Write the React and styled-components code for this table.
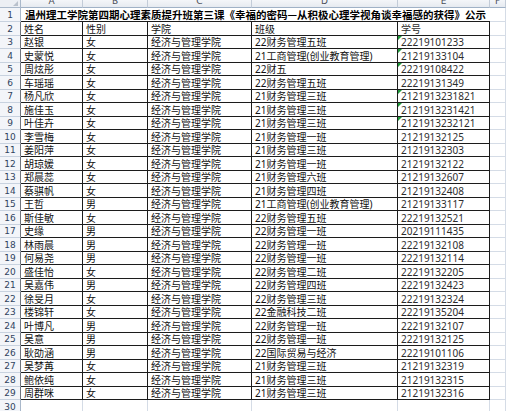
import styled, { createGlobalStyle } from "styled-components";

const GlobalStyle = createGlobalStyle`
    html, body {
        margin: 0;
        padding: 0;
        background: #ffffff;
    }
`;

const columns = ["A", "B", "C", "D", "E", "F"];

const students = [
    ["赵银", "女", "22财务管理五班", "22219101233", true],
    ["史蒙悦", "女", "21工商管理(创业教育管理)", "21219133104", true],
    ["周炫彤", "女", "22财五", "22219108422", true],
    ["车瑶瑶", "女", "22财务管理五班", "22219131349", false],
    ["杨凡欣", "女", "21财务管理三班", "2121913231821", true],
    ["施佳玉", "女", "21财务管理三班", "2121913231421", true],
    ["叶佳卉", "女", "21财务管理三班", "2121913232121", true],
    ["李雪梅", "女", "21财务管理一班", "21219132125", false],
    ["姜阳萍", "女", "21财务管理三班", "21219132303", false],
    ["胡琼媛", "女", "21财务管理一班", "21219132122", false],
    ["郑晨蕊", "女", "21财务管理六班", "21219132607", false],
    ["蔡骐帆", "女", "21财务管理四班", "21219132408", false],
    ["王哲", "男", "21工商管理(创业教育管理)", "21219133117", false],
    ["斯佳敏", "女", "22财务管理五班", "22219132521", false],
    ["史缘", "男", "22财务管理一班", "20219111435", false],
    ["林雨晨", "男", "22财务管理一班", "22219132108", false],
    ["何易尧", "男", "22财务管理一班", "22219132114", false],
    ["盛佳怡", "女", "22财务管理二班", "22219132205", false],
    ["吴嘉伟", "男", "22财务管理四班", "22219132423", false],
    ["徐旻月", "女", "22财务管理三班", "22219132324", false],
    ["楼锦轩", "女", "22金融科技二班", "22219135204", false],
    ["叶博凡", "男", "22财务管理一班", "22219132107", false],
    ["吴意", "男", "22财务管理一班", "22219132125", false],
    ["耿劭涵", "男", "22国际贸易与经济", "22219101106", false],
    ["吴梦苒", "女", "21财务管理三班", "21219132319", false],
    ["鲍依纯", "女", "21财务管理三班", "21219132315", false],
    ["周群咪", "女", "21财务管理三班", "21219132316", false],
];

const Sheet = styled.div`
    width: 506px;
    height: 411px;
    overflow: hidden;
    display: grid;
    grid-template-columns: 21px 62px 65px 104px 146px 92px 16px;
    grid-template-rows: 8px 14px repeat(14, 14px 13px) 14px;
    font-family: "Noto Sans", "Noto Sans CJK SC", sans-serif;
    font-size: 10px;
    color: #111111;
    background: #ffffff;
`;

const Corner = styled.div`
    position: relative;
    background: #eceff4;
    border-right: 1px solid #a9b8ca;
    border-bottom: 1px solid #a9b8ca;
    box-sizing: border-box;

    &::after {
        content: "";
        position: absolute;
        right: 2px;
        bottom: 1px;
        border-left: 5px solid transparent;
        border-bottom: 5px solid #b9c1cc;
    }
`;

const ColHeader = styled.div`
    box-sizing: border-box;
    display: flex;
    align-items: flex-end;
    justify-content: center;
    overflow: hidden;
    background: linear-gradient(#f4f6f9, #e6eaf0);
    border-right: 1px solid #c3ccd8;
    border-bottom: 1px solid #9fb1c6;
    font-family: "DejaVu Sans", sans-serif;
    font-size: 9px;
    line-height: 11px;
    color: #4a4f58;
`;

const RowHeader = styled.div`
    box-sizing: border-box;
    display: flex;
    align-items: center;
    justify-content: center;
    overflow: hidden;
    background: #f3f5f9;
    border-right: 1px solid ${({ $boxed }) => ($boxed ? "#6f747c" : "#a9b8ca")};
    border-bottom: 1px solid #c8d2df;
    font-family: "DejaVu Sans", sans-serif;
    font-size: 9px;
    color: #30445e;
`;

const Cell = styled.div`
    box-sizing: border-box;
    position: relative;
    display: flex;
    align-items: flex-end;
    padding: 0 3px 0 3px;
    overflow: hidden;
    white-space: nowrap;
    line-height: 12px;
    border-right: 1px solid ${({ $boxed }) => ($boxed ? "#1c1c1c" : "#d5dce6")};
    border-bottom: 1px solid ${({ $boxed }) => ($boxed ? "#1c1c1c" : "#d5dce6")};
    color: ${({ $num }) => ($num ? "#2d2d2d" : "#111111")};

    &::before {
        content: "";
        display: ${({ $flag }) => ($flag ? "block" : "none")};
        position: absolute;
        left: 0;
        top: 0;
        border-top: 4px solid #1f9a3a;
        border-right: 4px solid transparent;
    }
`;

const TitleCell = styled.div`
    grid-column: 2 / 7;
    box-sizing: border-box;
    display: flex;
    align-items: flex-end;
    justify-content: center;
    white-space: nowrap;
    border-bottom: 1px solid #1c1c1c;
    font-family: "Noto Sans CJK SC", sans-serif;
    font-size: 10.5px;
    font-weight: 700;
    line-height: 13px;
    color: #000000;
`;

function DataRow({ index, cells, flag, boxed }) {
    return (
        <>
            <RowHeader $boxed={boxed}>{index}</RowHeader>
            {cells.map((text, i) => (
                <Cell key={i} $boxed={boxed} $num={i === 4} $flag={flag && i === 4}>
                    {text}
                </Cell>
            ))}
            <Cell />
        </>
    );
}

export default function App() {
    return (
        <>
            <GlobalStyle />
            <Sheet>
                <Corner />
                {columns.map((c) => (
                    <ColHeader key={c}>{c}</ColHeader>
                ))}

                <RowHeader>1</RowHeader>
                <TitleCell>温州理工学院第四期心理素质提升班第三课《幸福的密码—从积极心理学视角谈幸福感的获得》公示</TitleCell>
                <Cell />

                <DataRow index={2} cells={["姓名", "性别", "学院", "班级", "学号"]} boxed />
                {students.map(([name, sex, cls, id, flag], i) => (
                    <DataRow
                        key={id + i}
                        index={i + 3}
                        cells={[name, sex, "经济与管理学院", cls, id]}
                        flag={flag}
                        boxed
                    />
                ))}
                <DataRow index={30} cells={["", "", "", "", ""]} />
            </Sheet>
        </>
    );
}
